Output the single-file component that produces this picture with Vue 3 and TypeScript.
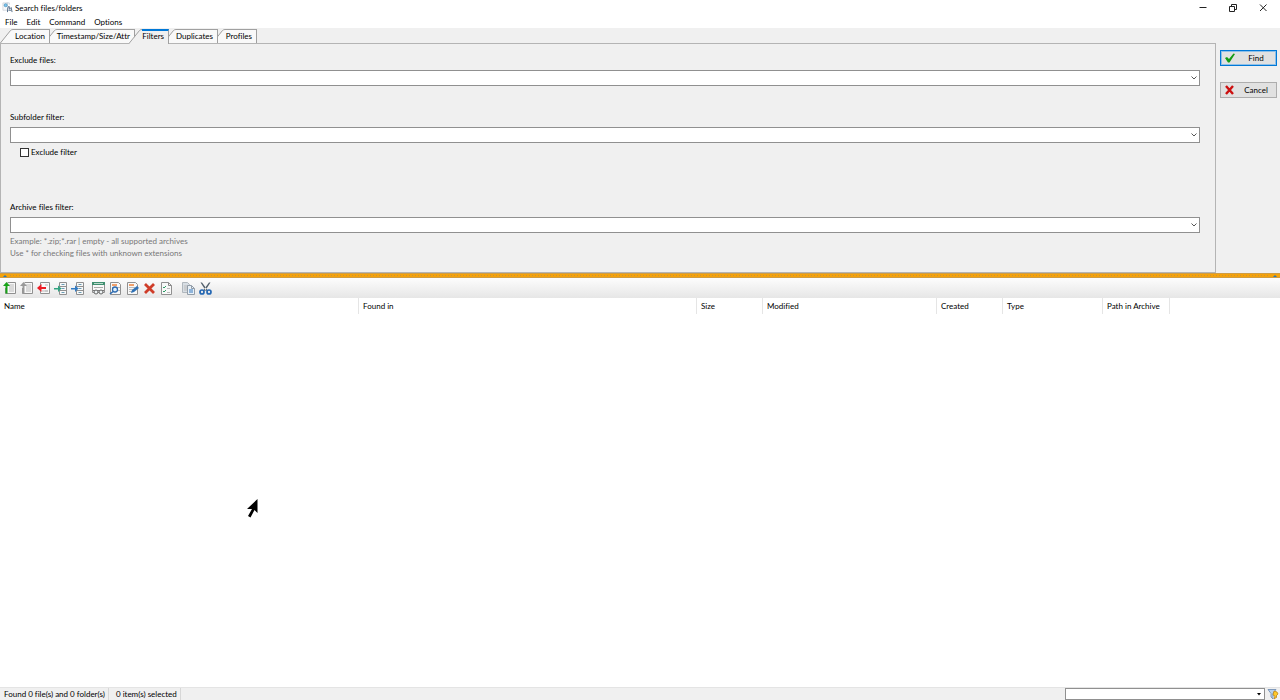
<script setup lang="ts">
import { ref } from 'vue'

interface Tab { id: string; label: string; width: number }
interface Column { label: string; width: number }

const menus: string[] = ['File', 'Edit', 'Command', 'Options']
const tabs: Tab[] = [
  { id: 'location', label: 'Location', width: 50 },
  { id: 'attributes', label: 'Timestamp/Size/Attr', width: 91 },
  { id: 'filters', label: 'Filters', width: 40 },
  { id: 'duplicates', label: 'Duplicates', width: 55 },
  { id: 'profiles', label: 'Profiles', width: 45 },
]
const columns: Column[] = [
  { label: 'Name', width: 359 },
  { label: 'Found in', width: 338 },
  { label: 'Size', width: 66 },
  { label: 'Modified', width: 174 },
  { label: 'Created', width: 66 },
  { label: 'Type', width: 100 },
  { label: 'Path in Archive', width: 67 },
]
const active = ref('filters')
const excludeFiles = ref('')
const subfolder = ref('')
const archive = ref('')
const excludeFilter = ref(false)
const quickFilter = ref('')
</script>

<template>
  <div class="window">
    <header class="titlebar">
      <svg class="app-icon" viewBox="0 0 12 12" aria-hidden="true">
        <path d="M1 1h5v8H1z" fill="#f7fafc" stroke="#c3cad0" stroke-width=".7" />
        <circle cx="4" cy="3.5" r="1.7" fill="#7cc5ee" stroke="#4189b5" stroke-width=".7" />
        <path d="M6 11V8l1-3h1v3l2-2 1 5M7 9h3" fill="none" stroke="#526a86" />
        <path d="M5 1h3v2" fill="none" stroke="#a9bac9" stroke-width=".6" />
      </svg>
      <h1>Search files/folders</h1>
      <div class="window-buttons">
        <button type="button" aria-label="Minimize"><svg viewBox="0 0 10 10"><path d="M1.500 4.500h7" /></svg></button>
        <button type="button" aria-label="Restore"><svg viewBox="0 0 10 10"><path d="M1.500 3.500h5v5h-5zM3.500 3.500v-2h5v5h-2" /></svg></button>
        <button type="button" aria-label="Close"><svg viewBox="0 0 10 10"><path d="M2 1.500l6.500 6.500M8.500 1.500L2 8" /></svg></button>
      </div>
    </header>

    <nav class="menubar">
      <button v-for="m in menus" :key="m" type="button">{{ m }}</button>
    </nav>

    <main class="search">
      <section class="tabbed">
        <div class="tabs" role="tablist">
          <button
            v-for="(t, i) in tabs" :key="t.id" type="button" role="tab"
            class="tab" :class="{ active: active === t.id }"
            :aria-selected="active === t.id"
            :style="{ width: t.width + 'px', zIndex: active === t.id ? 9 : 6 - i }"
            @click="active = t.id"
          >
            <svg class="slant" viewBox="0 0 13 15" aria-hidden="true">
              <path class="slant-fill" d="M0 15L11 1q1-1 2-1v15z" />
              <path class="slant-line" d="M0 14.500L10.500 1.500q1-1 2.500-1" />
            </svg>
            <span class="tab-body"><span class="tab-label">{{ t.label }}</span></span>
          </button>
        </div>
        <form class="panel" @submit.prevent>
          <div class="field first">
            <label for="exclude">Exclude files:</label>
            <div class="combo">
              <select id="exclude" v-model="excludeFiles"><option value=""></option></select>
              <svg viewBox="0 0 8 8" aria-hidden="true"><path d="M1.500 2.500L4 5l2.500-2.500" /></svg>
            </div>
          </div>
          <div class="field second">
            <label for="subfolder">Subfolder filter:</label>
            <div class="combo">
              <select id="subfolder" v-model="subfolder"><option value=""></option></select>
              <svg viewBox="0 0 8 8" aria-hidden="true"><path d="M1.500 2.500L4 5l2.500-2.500" /></svg>
            </div>
            <label class="check"><input v-model="excludeFilter" type="checkbox">Exclude filter</label>
          </div>
          <div class="field">
            <label for="archive">Archive files filter:</label>
            <div class="combo">
              <select id="archive" v-model="archive"><option value=""></option></select>
              <svg viewBox="0 0 8 8" aria-hidden="true"><path d="M1.500 2.500L4 5l2.500-2.500" /></svg>
            </div>
            <p class="hint">Example: *.zip;*.rar | empty - all supported archives<br>Use * for checking files with unknown extensions</p>
          </div>
        </form>
      </section>
      <aside class="actions">
        <button type="button" class="find">
          <svg viewBox="0 0 12 12" aria-hidden="true"><path d="M1 6l2-1 2 2 4.500-5.500 1.500.5L5.500 10.500H4z" fill="#149c14" /></svg>
          <span>Find</span>
        </button>
        <button type="button">
          <svg viewBox="0 0 12 12" aria-hidden="true"><path d="M2 2l7 8M9 2l-7 8" fill="none" stroke="#cc1010" stroke-width="2.400" /></svg>
          <span>Cancel</span>
        </button>
      </aside>
    </main>

    <div class="splitter" role="separator">
      <svg viewBox="0 0 6 3" aria-hidden="true"><path d="M1 3L3 1l2 2z" /></svg>
      <i></i>
      <svg viewBox="0 0 6 3" aria-hidden="true"><path d="M1 3L3 1l2 2z" /></svg>
    </div>

    <div class="toolbar" role="toolbar" aria-label="Results">
      <button type="button" aria-label="Go to file">
        <svg viewBox="0 0 15 15"><path class="page" d="M5.500 1.500h8v11h-10V7" /><path class="rule" d="M7 4h5M7 6h5M7 8h5M7 10h5" /><path d="M1 5L4.500 1 8 5H5.500v7.500h-2V5z" fill="#18a318" /></svg>
      </button>
      <button type="button" aria-label="Go to folder">
        <svg viewBox="0 0 15 15"><path class="page" d="M5.500 1.500h8v11h-10V7" /><path class="rule" d="M7 4h5M7 6h5M7 8h5M7 10h5" /><path d="M1 5L4.500 1 8 5H5.500v7.500h-2V5z" fill="#999" /></svg>
      </button>
      <button type="button" aria-label="Remove from list">
        <svg viewBox="0 0 15 15"><path class="page" d="M4.500 1.500h9v11h-9z" /><path class="rule" d="M9 4h3M9 10h3M6 10h6" /><path d="M1 7L5.500 3v3H10v2H5.500v3z" fill="#ed1c24" /></svg>
      </button>
      <button type="button" aria-label="Load results">
        <svg viewBox="0 0 15 15"><path class="page" d="M6.500 1.500h7v12h-7zM6.500 5.500h7M6.500 9.500h7" /><path d="M8.500 3.500h3M8.500 7.500h3M8.500 11.500h3" stroke="#6b9db5" /><path d="M1 7h4V4.500l3.500 3L5 11V8.500H1z" fill="#31a481" /></svg>
      </button>
      <button type="button" aria-label="Append results">
        <svg viewBox="0 0 15 15"><path class="page" d="M6.500 1.500h7v12h-7zM6.500 5.500h7M6.500 9.500h7" /><path d="M8.500 3.500h3M8.500 7.500h3M8.500 11.500h3" stroke="#6b9db5" /><path d="M1 7h4V4.500l3.500 3L5 11V8.500H1z" fill="#317bc4" /></svg>
      </button>
      <button type="button" class="group" aria-label="View">
        <svg viewBox="0 0 15 15"><path class="page" d="M1.500 1.500h12v10h-12z" /><path d="M1 1h13v3H1z" fill="#3f8f70" /><path d="M3 2.500h9" stroke="#b9d9ca" /><path d="M3 6.500h9" stroke="#aaa" /><path d="M2 9.500h11" stroke="#777" /><circle cx="5" cy="11" r="2" fill="#eef3f5" stroke="#666" /><circle cx="10" cy="11" r="2" fill="#eef3f5" stroke="#666" /></svg>
      </button>
      <button type="button" aria-label="Preview">
        <svg viewBox="0 0 15 15"><path class="page" d="M2.500 1.500h8l2 2v10h-10z" /><path d="M4 3h5v2H4z" fill="#f1a06b" /><path class="rule" d="M4 6.500h8M10 9.500h2" /><circle cx="7" cy="8.500" r="2.500" fill="#dff0fc" stroke="#2d6ab0" stroke-width="1.300" /><path d="M5 10.500L2 13" stroke="#2d6ab0" stroke-width="1.600" /></svg>
      </button>
      <button type="button" aria-label="Edit file">
        <svg viewBox="0 0 15 15"><path class="page" d="M2.500 1.500h8l2 2v10h-10z" /><path d="M4 3h5v2H4z" fill="#f1a06b" /><path class="rule" d="M4 6.500h6M4 8.500h4M4 10.500h3" /><path d="M6 12l1-3 5-4 2 2-5 4z" fill="#2f71b5" /></svg>
      </button>
      <button type="button" aria-label="Delete">
        <svg viewBox="0 0 15 15"><path d="M3 3l9 9M12 3l-9 9" fill="none" stroke="#cf3d29" stroke-width="2.800" /></svg>
      </button>
      <button type="button" aria-label="Select">
        <svg viewBox="0 0 15 15"><path class="page" d="M2.500 1.500h7l3 3v9h-10z" /><path d="M9.500 1.500v3h3" fill="none" stroke="#888" /><path d="M4 6l1 1 2-2M4 10l1 1 2-2" fill="none" stroke="#2e9c67" /><path class="rule" d="M8 7.500h3M8 11.500h3" /></svg>
      </button>
      <button type="button" class="group last" aria-label="Copy">
        <svg viewBox="0 0 15 15"><path d="M1.500 1.500h5l2 2v8h-7z" fill="#d8dee4" stroke="#b0b7bd" /><path class="rule" d="M3 5h4M3 7h4M3 9h4" /><path d="M6.500 4.500h4l3 3v6h-7z" fill="#e9f1f8" stroke="#929da8" /><path d="M10.500 4.500v3h3" fill="none" stroke="#929da8" /><path d="M8 8h4v4H8z" fill="#8fb4da" /></svg>
      </button>
      <button type="button" aria-label="Cut">
        <svg viewBox="0 0 15 15"><path d="M2.500 1.500l1.500 0L9.500 9 8 10zM12.500 1.500l-1.500 0L5.500 9l1.500 1z" fill="#53616d" /><circle cx="4" cy="11" r="2" fill="none" stroke="#2467b3" stroke-width="1.700" /><circle cx="11" cy="11" r="2" fill="none" stroke="#2467b3" stroke-width="1.700" /></svg>
      </button>
    </div>

    <section class="results">
      <table>
        <colgroup>
          <col v-for="c in columns" :key="c.label" :style="{ width: c.width + 'px' }">
          <col>
        </colgroup>
        <thead><tr><th v-for="c in columns" :key="c.label" scope="col">{{ c.label }}</th><td></td></tr></thead>
      </table>
      <svg class="pointer" viewBox="0 0 12 20" aria-hidden="true"><path d="M10.500 1v14L7.500 12 3.500 19.500 1 18 5 11H0z" fill="#000" /></svg>
    </section>

    <footer class="statusbar">
      <span class="found">Found 0 file(s) and 0 folder(s)</span>
      <span class="selected">0 item(s) selected</span>
      <div class="quick">
        <select v-model="quickFilter" aria-label="Quick filter"><option value=""></option></select>
        <svg viewBox="0 0 6 6" aria-hidden="true"><path d="M1 2h4L3 4.500z" fill="#000" /></svg>
      </div>
      <button type="button" class="funnel" aria-label="Filter">
        <svg viewBox="0 0 12 12"><path d="M1 1.500h8L6 5.500V11L4 9V5.500z" fill="#b9d1ec" stroke="#6988ad" stroke-width=".8" /><path d="M7 3l3 1 1 2-2 2 1 1-3 2 1-3-2-1z" fill="#ffc928" stroke="#b87c0a" stroke-width=".7" /></svg>
      </button>
    </footer>
  </div>
</template>

<style>
html, body, #app { height: 100%; }
body { margin: 0; overflow: hidden; }
</style>

<style scoped>
.window { display: flex; flex-direction: column; height: 100%; background: #fff; color: #000; font-family: Lato, "Open Sans", sans-serif; font-size: 8px; line-height: 12px; font-variant-ligatures: none; }
.window * { box-sizing: border-box; }
button, select, input { font: inherit; font-variant-ligatures: none; color: inherit; margin: 0; padding: 0; border-radius: 0; }
button { border: 0; background: none; white-space: nowrap; }
svg { display: block; flex: none; }
.titlebar { display: flex; align-items: center; height: 15px; padding-left: 2px; }
.app-icon { width: 11px; height: 11px; }
h1 { margin: 0 auto 0 2px; font-size: 8px; font-weight: 400; }
.window-buttons { display: flex; margin-right: 2px; }
.window-buttons button { display: grid; place-items: center; width: 30px; height: 14px; }
.window-buttons svg { width: 10px; height: 10px; fill: none; stroke: #222; }
.menubar { display: flex; align-items: center; gap: 9px; height: 13px; padding-left: 5px; }
.search { display: flex; background: #f0f0f0; }
.tabbed { flex: 1; min-width: 0; }
.tabs { display: flex; height: 15px; position: relative; z-index: 1; }
.tab { display: flex; position: relative; height: 15px; margin-top: 1px; }
.tab:not(.active) { height: 14px; overflow: hidden; }
.tab + .tab { margin-left: -6px; }
.slant { width: 13px; height: 15px; }
.slant-fill { fill: #f9f9f9; }
.active .slant-fill { fill: #f0f0f0; }
.slant-line { fill: none; stroke: #a0a0a0; }
.tab-body { flex: 1; min-width: 0; height: 100%; background: #f9f9f9; border: solid #a0a0a0; border-width: 1px 1px 0 0; }
.active .tab-body { background: #f0f0f0; border-top: 2px solid #0078d7; }
.tab-label { display: block; text-align: right; margin: 0 4px 0 -12px; line-height: 12px; }
.active .tab-label { line-height: 10px; }
.panel { padding: 10px 15px 13px 9px; border: 1px solid #b4b4b4; min-height: 230px; }
.field label { display: block; }
.field.first { margin-bottom: 25px; }
.field.second { margin-bottom: 43px; }
.combo { position: relative; margin-top: 4px; }
.combo select { appearance: none; display: block; width: 100%; height: 16px; border: 1px solid #909090; background: #fff; }
.combo svg { position: absolute; right: 2px; top: 4px; width: 8px; height: 8px; pointer-events: none; fill: none; stroke: #555; }
.field label.check { display: flex; align-items: center; gap: 2px; margin: 3px 0 0 10px; width: max-content; }
.check input { appearance: none; width: 9px; height: 9px; border: 1px solid #333; background: #fff; }
.check input:checked { background: #0078d7; }
.hint { margin: 2px 0 0; color: #777; }
.actions { display: flex; flex-direction: column; gap: 16px; width: 64px; padding: 22px 3px 0 4px; }
.actions button { display: flex; align-items: center; height: 16px; padding-left: 3px; background: #e1e1e1; border: 1px solid #adadad; }
.actions .find { border-color: #0078d7; box-shadow: inset 0 0 0 1px #8fc0e8; }
.actions svg { width: 12px; height: 12px; }
.actions span { flex: 1; text-align: center; }
.splitter { display: flex; align-items: center; gap: 2px; height: 5px; padding: 0 2px; background: #f5a20a; border: solid #cf9c42; border-width: 1px 0; }
.splitter i { flex: 1; height: 1px; background: repeating-linear-gradient(90deg, #c9923a 0 1px, #f5a20a 1px 3px); }
.splitter svg { width: 6px; height: 3px; fill: #2878b8; }
.toolbar { display: flex; align-items: center; gap: 2px; height: 20px; padding-left: 2px; background: linear-gradient(#fdfdfd, #e6e6e6); }
.toolbar button { width: 15px; height: 15px; }
.toolbar .group { margin-left: 4px; }
.toolbar .last { margin-left: 5px; }
.toolbar svg { width: 15px; height: 15px; }
.page { fill: #f8f8f8; stroke: #909090; }
.rule { fill: none; stroke: #bbb; }
.results { position: relative; flex: 1; min-height: 0; }
table { width: 100%; table-layout: fixed; border-collapse: separate; border-spacing: 0; }
th, td { height: 16px; padding: 0 0 0 4px; border-right: 1px solid #e5e5e5; font-weight: 400; text-align: left; white-space: nowrap; }
td { border: 0; }
.pointer { position: absolute; left: 247px; top: 200px; width: 12px; height: 20px; }
.statusbar { display: flex; height: 13px; background: #f0f0f0; border-top: 1px solid #e4e4e4; }
.statusbar span { padding: 0 3px 0 4px; border-right: 1px solid #d7d7d7; }
.statusbar .selected { margin-right: auto; padding-left: 7px; }
.quick { position: relative; width: 200px; }
.quick select { appearance: none; display: block; width: 100%; height: 12px; border: 1px solid #909090; background: #fff; }
.quick svg { position: absolute; right: 3px; top: 3px; width: 6px; height: 6px; pointer-events: none; }
.funnel { margin: 0 1px 0 2px; }
.funnel svg { width: 12px; height: 12px; }
</style>
